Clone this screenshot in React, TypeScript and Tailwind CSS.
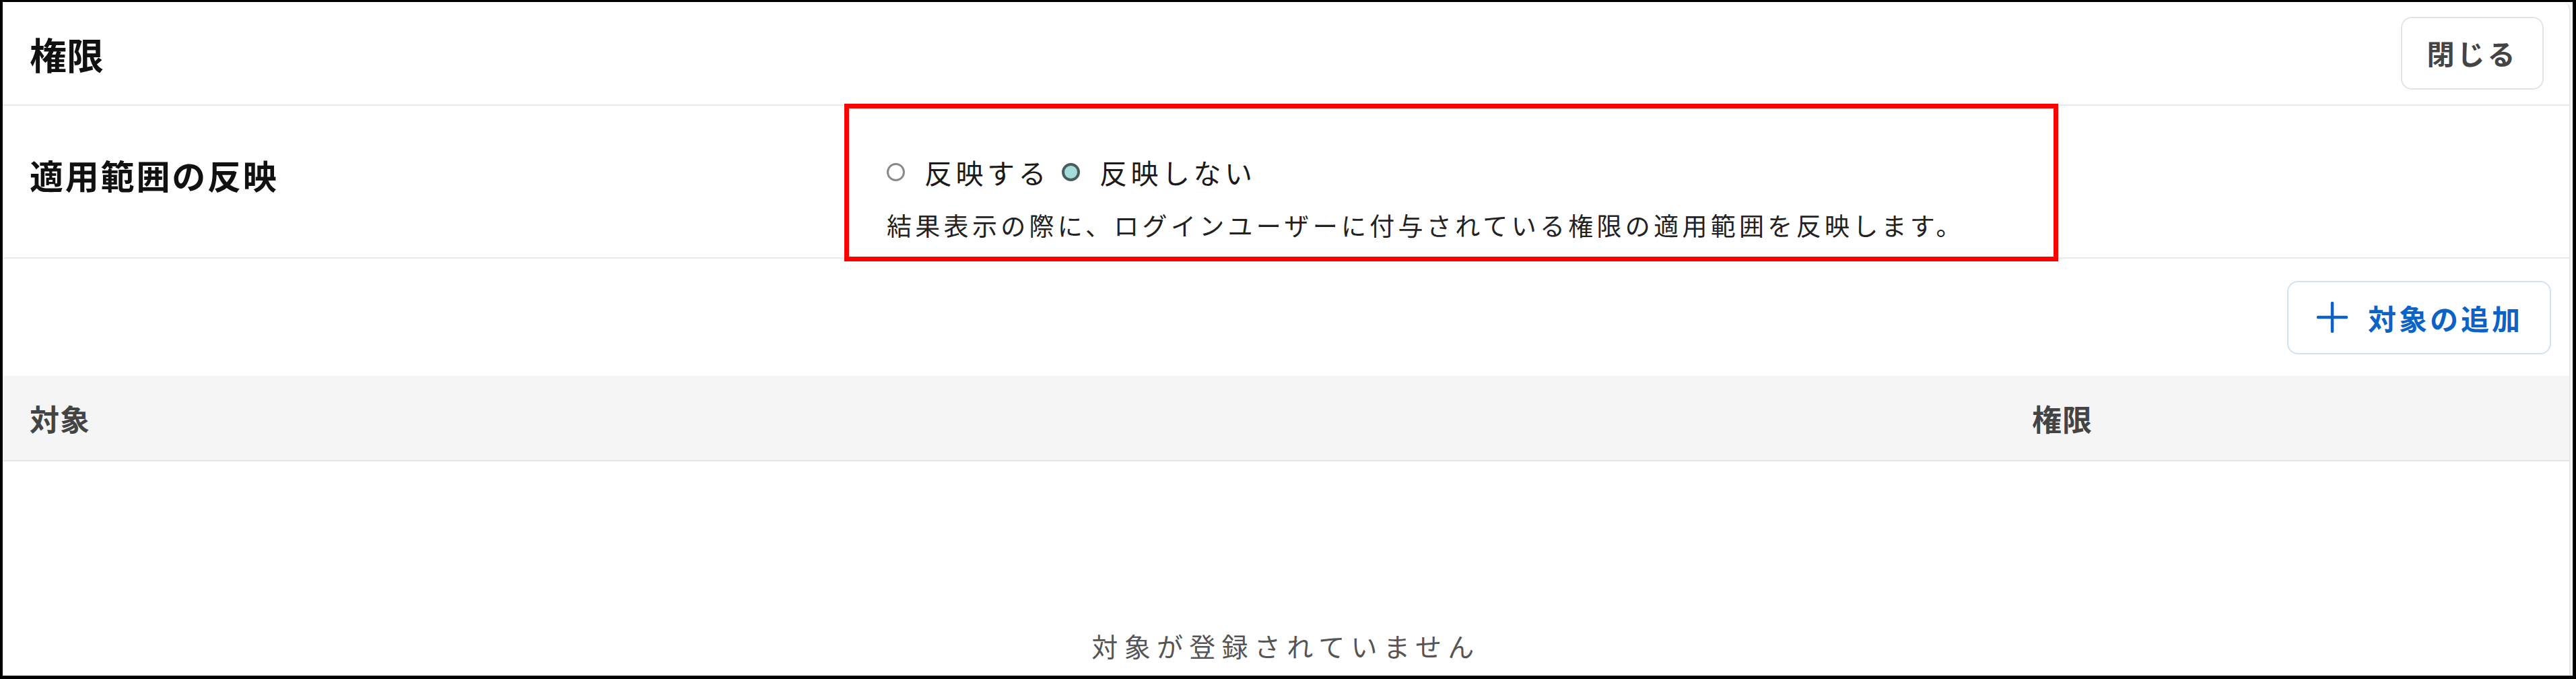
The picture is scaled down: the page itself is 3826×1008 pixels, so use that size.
import React from 'react';

const JP = "font-['Noto_Sans_CJK_JP','Noto_Sans',sans-serif]";

function Radio({ checked, label }: { checked?: boolean; label: string }) {
  return (
    <label className="flex items-center gap-[29px]">
      {checked ? (
        <span className="w-[27px] h-[27px] rounded-full border-[4px] border-[#4a5d5d] bg-[#a3dcdb]" />
      ) : (
        <span className="w-[27px] h-[27px] rounded-full border-[3px] border-[#8a8a8a] bg-white" />
      )}
      <span className="text-[41px] leading-[56px] tracking-[5.5px] text-[#1a1a1a]">{label}</span>
    </label>
  );
}

export default function App() {
  return (
    <div
      className={`${JP} relative w-full h-[1008px] overflow-hidden bg-white border-t-[3px] border-l-[4px] border-b-[5px] border-r-[5px] border-black`}
    >
      <div className="mr-[3px] h-full bg-white border-r-2 border-[#e5e7eb] rounded-tr-[12px]">
        {/* header */}
        <div className="h-[154px] flex items-center justify-between pl-[40px] pr-[38px] border-b-2 border-[#e8eaee]">
          <h1 className="text-[55px] leading-[64px] font-bold text-[#111]">権限</h1>
          <button className="w-[212px] h-[108px] flex items-center justify-center rounded-[16px] border-2 border-[#e4e4e4] bg-white text-[41px] font-bold tracking-[4px] text-[#444]">
            閉じる
          </button>
        </div>

        {/* scope reflection */}
        <div className="h-[227px] flex border-b-2 border-[#e8eaee]">
          <div className="w-[1313px] pl-[40px] pt-[74px]">
            <div className="text-[50px] leading-[56px] font-bold tracking-[2.8px] text-[#111]">適用範囲の反映</div>
          </div>
          <div className="pt-[70px]">
            <div className="flex items-center gap-[18px]">
              <Radio label="反映する" />
              <Radio checked label="反映しない" />
            </div>
            <p className="mt-[26px] text-[37px] leading-[50px] tracking-[5.3px] text-[#222]">
              結果表示の際に、ログインユーザーに付与されている権限の適用範囲を反映します。
            </p>
          </div>
        </div>

        {/* add target */}
        <div className="h-[174px] flex items-center justify-end pr-[27px]">
          <button className="h-[109px] flex items-center gap-[30px] pl-[42px] pr-[40px] rounded-[16px] border-2 border-[#cfe2f8] bg-white text-[42px] font-bold tracking-[4px] text-[#0b63c5]">
            <svg width="46" height="46" viewBox="0 0 46 46" fill="none" stroke="#0b63c5" strokeWidth="4.5" strokeLinecap="round">
              <line x1="23" y1="2" x2="23" y2="44" />
              <line x1="2" y1="23" x2="44" y2="23" />
            </svg>
            <span>対象の追加</span>
          </button>
        </div>

        {/* table */}
        <div className="h-[127px] flex items-center bg-[#f5f5f5] border-b-2 border-[#e6e7ea]">
          <div className="flex-1 pl-[40px] text-[44px] font-bold tracking-[1px] text-[#444]">対象</div>
          <div className="w-[800px] pl-[2px] text-[44px] font-bold tracking-[1px] text-[#444]">権限</div>
        </div>
        <div className="pt-[246px] text-center text-[39px] leading-[54px] tracking-[9.3px] text-[#555]">
          対象が登録されていません
        </div>
      </div>

      {/* highlight annotation */}
      <div className="absolute left-[1250px] top-[151px] w-[1803px] h-[234px] border-[7px] border-[#ff0000] pointer-events-none" />
    </div>
  );
}
